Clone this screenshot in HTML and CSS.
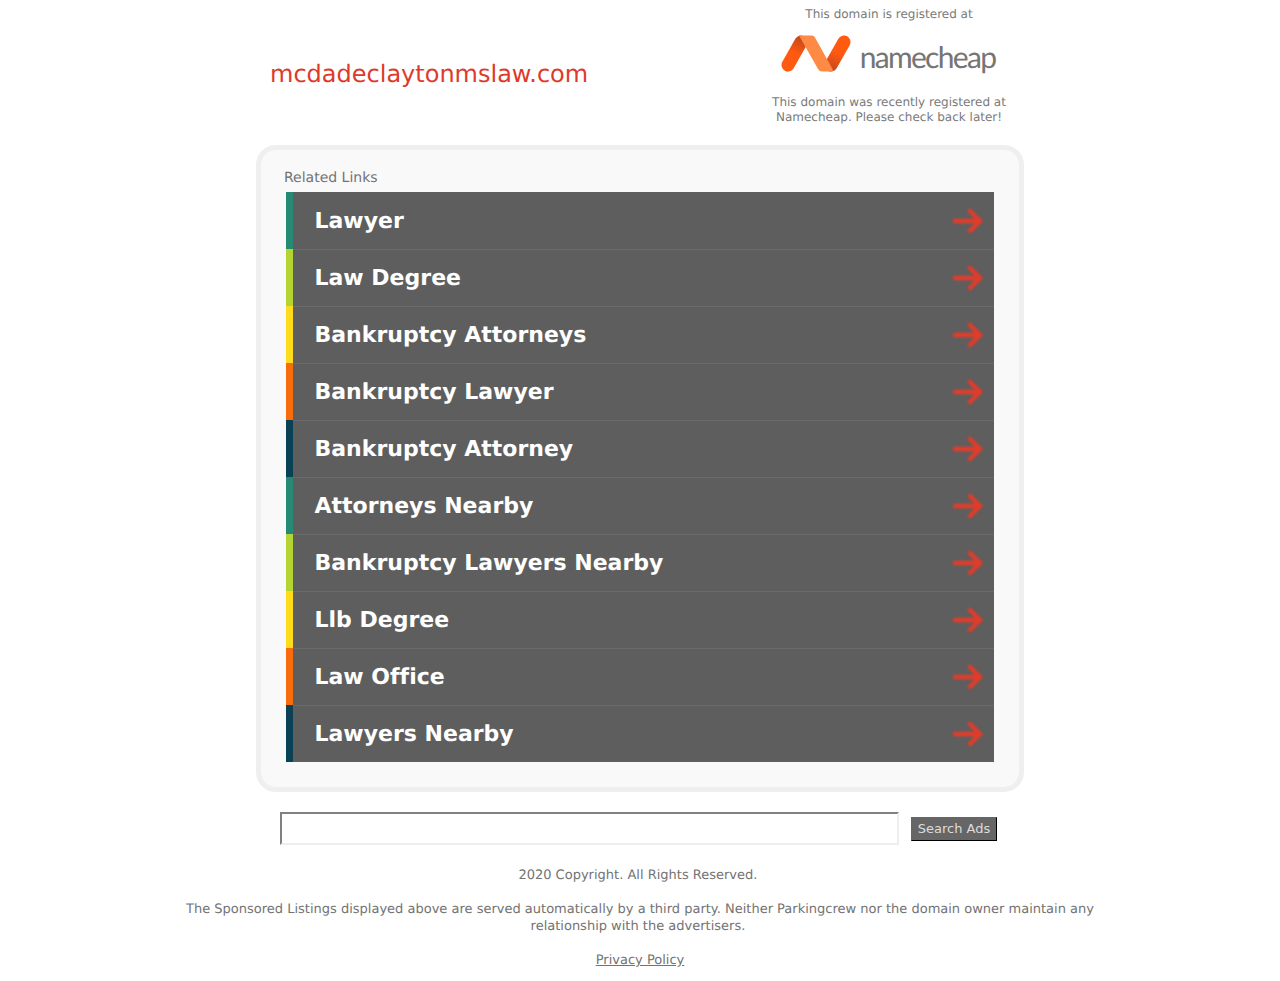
FILE: index.html
```html
<!DOCTYPE html>
<html>
<head>
	<meta charset="UTF-8">
	<title>mcdadeclaytonmslaw.com</title>
	<link rel="stylesheet" href="styles.css">
</head>
<body>
<div id="wrapper">

	<div id="header">
		<div id="domain">mcdadeclaytonmslaw.com</div>
		<div id="registrar">
			<div class="regText">This domain is registered at</div>
			<div id="logo">
				<svg class="logoMark" width="72" height="40" viewBox="0 0 72 40">
					<defs>
						<linearGradient id="shadeLeft" gradientUnits="userSpaceOnUse" x1="21" y1="3" x2="13" y2="19">
							<stop offset="0" stop-color="#c2461d"/>
							<stop offset="1" stop-color="#ff5a10"/>
						</linearGradient>
						<linearGradient id="shadeRight" gradientUnits="userSpaceOnUse" x1="49" y1="37" x2="57" y2="19">
							<stop offset="0" stop-color="#c2461d"/>
							<stop offset="1" stop-color="#ff5a10"/>
						</linearGradient>
					</defs>
					<path class="logoBar" d="M7 31 L20 8" stroke="url(#shadeLeft)"/>
					<path class="logoBar" d="M63 8 L50 31" stroke="url(#shadeRight)"/>
					<path d="M18 1.5 H31 Q33 1.5 34 3.500 L51.500 35 Q52.500 37.500 50 37.500 H41 Q38.500 37.500 37 35 L18 1.5 Z" fill="#ff8a45"/>
				</svg>
				<span class="logoName">namecheap</span>
			</div>
			<div class="regText">This domain was recently registered at<br>Namecheap. Please check back later!</div>
		</div>
	</div>

	<div id="panel">
		<div id="related">Related Links</div>
		<div id="links">
			<a class="linkRow green" href="#">Lawyer<svg class="arrow" width="32" height="26" viewBox="0 0 32 26"><path d="M2 13 H27 M17 3 L27 13 L17 23"/></svg></a>
			<a class="linkRow lime" href="#">Law Degree<svg class="arrow" width="32" height="26" viewBox="0 0 32 26"><path d="M2 13 H27 M17 3 L27 13 L17 23"/></svg></a>
			<a class="linkRow yellow" href="#">Bankruptcy Attorneys<svg class="arrow" width="32" height="26" viewBox="0 0 32 26"><path d="M2 13 H27 M17 3 L27 13 L17 23"/></svg></a>
			<a class="linkRow orange" href="#">Bankruptcy Lawyer<svg class="arrow" width="32" height="26" viewBox="0 0 32 26"><path d="M2 13 H27 M17 3 L27 13 L17 23"/></svg></a>
			<a class="linkRow navy" href="#">Bankruptcy Attorney<svg class="arrow" width="32" height="26" viewBox="0 0 32 26"><path d="M2 13 H27 M17 3 L27 13 L17 23"/></svg></a>
			<a class="linkRow green" href="#">Attorneys Nearby<svg class="arrow" width="32" height="26" viewBox="0 0 32 26"><path d="M2 13 H27 M17 3 L27 13 L17 23"/></svg></a>
			<a class="linkRow lime" href="#">Bankruptcy Lawyers Nearby<svg class="arrow" width="32" height="26" viewBox="0 0 32 26"><path d="M2 13 H27 M17 3 L27 13 L17 23"/></svg></a>
			<a class="linkRow yellow" href="#">Llb Degree<svg class="arrow" width="32" height="26" viewBox="0 0 32 26"><path d="M2 13 H27 M17 3 L27 13 L17 23"/></svg></a>
			<a class="linkRow orange" href="#">Law Office<svg class="arrow" width="32" height="26" viewBox="0 0 32 26"><path d="M2 13 H27 M17 3 L27 13 L17 23"/></svg></a>
			<a class="linkRow navy" href="#">Lawyers Nearby<svg class="arrow" width="32" height="26" viewBox="0 0 32 26"><path d="M2 13 H27 M17 3 L27 13 L17 23"/></svg></a>
		</div>
	</div>

	<div id="search">
		<input id="searchBox" type="text"/>
		<input id="searchBtn" type="button" value="Search Ads"/>
	</div>

	<div id="footer">
		<p>2020 Copyright. All Rights Reserved.&nbsp;</p>
		<p>The Sponsored Listings displayed above are served automatically by a third party. Neither Parkingcrew nor the domain owner maintain any relationship with the advertisers.&nbsp;</p>
		<p><a href="#">Privacy Policy</a></p>
	</div>

</div>
</body>
</html>
```

FILE: styles.css
```css
body{
	margin:0;
	background:#fff;
	font-family:"DejaVu Sans",sans-serif;
	color:#737373;
	text-rendering:geometricPrecision;
	font-variant-ligatures:none;
}
#wrapper{
	width:920px;
	margin:0 auto;
}

#header{
	width:768px;
	height:145px;
	margin:0 auto;
	display:flex;
	justify-content:space-between;
}
#domain{
	padding:59px 0 0 14px;
	font-size:24px;
	line-height:30px;
	color:#dd3a2a;
}
#registrar{
	width:270px;
	text-align:center;
	font-size:12px;
	line-height:15px;
	padding-top:7px;
}
.regText{
	color:#7a7a7a;
}
#logo{
	box-sizing:border-box;
	height:73px;
	padding:12px 2px 0 0;
	display:flex;
	align-items:flex-start;
	justify-content:center;
	gap:7px;
}
.logoMark{
	flex:none;
}
.logoBar{
	fill:none;
	stroke-width:13;
	stroke-linecap:round;
}
.logoName{
	margin-top:3px;
	font-family:Lato,sans-serif;
	font-weight:400;
	font-size:30px;
	line-height:40px;
	letter-spacing:-1.7px;
	color:#757575;
}

#panel{
	box-sizing:border-box;
	width:768px;
	height:647px;
	margin:0 auto;
	padding:18px 25px 0 23px;
	background:#f9f9f9;
	border:5px solid #efefef;
	border-radius:20px;
}
#related{
	height:24px;
	font-size:14px;
	line-height:20px;
	color:#737373;
}
#links{
	margin-left:2px;
}
.linkRow{
	box-sizing:border-box;
	height:57px;
	display:flex;
	align-items:center;
	justify-content:space-between;
	padding:2px 9px 0 21.5px;
	background:#5e5e5e;
	border-left:7px solid #000;
	box-shadow:inset 0 1px 0 #6a6a6a;
	font-size:22px;
	font-weight:bold;
	color:#fff;
	text-decoration:none;
}
.linkRow:first-child{
	box-shadow:none;
}
.green{border-left-color:#258a73;}
.lime{border-left-color:#b4d433;}
.yellow{border-left-color:#fedb1b;}
.orange{border-left-color:#f96c0e;}
.navy{border-left-color:#0a4155;}
.arrow{
	margin-bottom:2px;
	fill:none;
	stroke:#e23c2a;
	stroke-width:4.5;
	stroke-linecap:round;
	filter:blur(0.8px);
}

#search{
	width:717px;
	margin:20px 0 0 100px;
	display:flex;
	align-items:center;
	gap:12px;
}
#searchBox{
	box-sizing:border-box;
	width:619px;
	height:33px;
	margin:0;
	padding:0;
	background:#fff;
	border:2px solid #eee;
	border-color:#808080 #eee #eee #808080;
}
#searchBtn{
	box-sizing:border-box;
	width:86px;
	height:24px;
	margin:0;
	padding:0;
	background:#666;
	color:#ddd;
	border:1px solid #000;
	border-color:#666 #000 #000 #666;
	font-family:"DejaVu Sans",sans-serif;
	font-size:13px;
}

#footer{
	padding-top:5px;
	font-size:13px;
	line-height:17px;
	text-align:center;
	color:#737373;
}
#footer p{
	margin:17px 0;
}
#footer a{
	color:#737373;
}
```
